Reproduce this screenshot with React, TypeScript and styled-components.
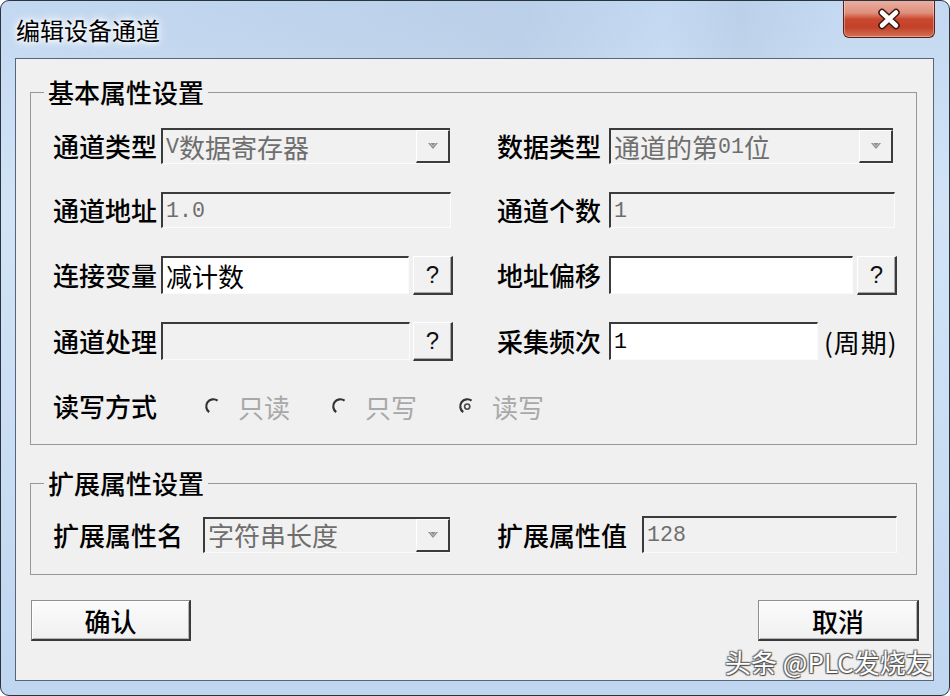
import React from "react";
import styled, { createGlobalStyle } from "styled-components";

const CJK = `"Noto Sans CJK SC", "Noto Sans", sans-serif`;

const Global = createGlobalStyle`
  html, body { margin: 0; padding: 0; background: #ffffff; }
  body { width: 950px; height: 696px; overflow: hidden; font-family: ${CJK}; }
`;

const Window = styled.div`
  position: relative;
  box-sizing: border-box;
  width: 950px;
  height: 696px;
  border: 1px solid #2c3340;
  border-radius: 9px;
  overflow: hidden;
  background: linear-gradient(180deg, #c3d8f1 0%, #d2e3f6 30%, #c8dcf2 70%, #c0d6f0 100%);
  display: flex;
  flex-direction: column;
  font-family: ${CJK};
`;

const TitleBar = styled.div`
  height: 57px;
  flex: none;
  display: flex;
  align-items: flex-start;
  justify-content: space-between;
  padding-left: 15px;
  background: linear-gradient(90deg, rgba(180, 200, 225, 0.0) 0%, rgba(170, 190, 215, 0.35) 55%, rgba(200, 220, 240, 0) 70%, rgba(170, 190, 215, 0.3) 78%, rgba(200, 220, 240, 0) 88%);
`;

const Title = styled.div`
  margin-top: 17px;
  font-size: 24px;
  line-height: 24px;
  color: #000;
  text-shadow: 0 0 4px #fff, 0 0 8px #fff, 0 0 12px #fff;
`;

const CloseButton = styled.div`
  box-sizing: border-box;
  width: 92px;
  height: 38px;
  margin-top: -1px;
  margin-right: 14px;
  border: 1px solid #5a2217;
  border-top: none;
  border-radius: 0 0 6px 6px;
  background: linear-gradient(180deg, #eab1a3 0%, #df8f7c 35%, #c9472e 52%, #c2432a 75%, #d67158 100%);
  box-shadow: inset 0 0 0 1px rgba(255, 255, 255, 0.35);
  display: flex;
  align-items: center;
  justify-content: center;
`;

const Client = styled.div`
  box-sizing: border-box;
  height: 623px;
  margin: 0 15px 0 14px;
  border: 1px solid #55657a;
  background: #f0f0f0;
  padding: 20px 16px 0 14px;
  display: flex;
  flex-direction: column;
`;

const Group = styled.fieldset<{ $mt?: number }>`
  margin: ${(p) => p.$mt ?? 0}px 0 0 0;
  padding: 0;
  min-width: 0;
  border: 1px solid #979797;
`;

const Legend = styled.legend`
  margin-left: 13px;
  padding: 0 4px;
  font-size: 26px;
  line-height: 26px;
  font-weight: 500;
  color: #000;
`;

const GroupBody = styled.div<{ $pt: number; $pb: number }>`
  padding: ${(p) => p.$pt}px 20px ${(p) => p.$pb}px 22px;
  display: grid;
  grid-template-columns: 399px 399px;
  column-gap: 45px;
  row-gap: 28px;
`;

const Field = styled.div<{ $h?: number; $span?: boolean }>`
  display: flex;
  align-items: center;
  height: ${(p) => p.$h ?? 36}px;
  ${(p) => (p.$span ? "grid-column: 1 / span 2;" : "")}
`;

const Label = styled.span<{ $w: number }>`
  flex: none;
  width: ${(p) => p.$w}px;
  font-size: 26px;
  line-height: 36px;
  font-weight: 500;
  color: #000;
  white-space: nowrap;
`;

const TextBox = styled.div<{ $w: number; $h?: number; $disabled?: boolean }>`
  box-sizing: border-box;
  flex: none;
  width: ${(p) => p.$w}px;
  height: ${(p) => p.$h ?? 36}px;
  border-style: solid;
  border-width: 2px 1px 1px 2px;
  border-color: #3b3b3b #fbfbfb #fbfbfb #3b3b3b;
  background: ${(p) => (p.$disabled ? "#f1f1f1" : "#ffffff")};
  color: ${(p) => (p.$disabled ? "#6e6e6e" : "#000000")};
  padding-left: 3px;
  font-size: 26px;
  line-height: 28px;
  display: flex;
  align-items: center;
  white-space: nowrap;
  overflow: hidden;
`;

const Combo = styled.div<{ $w: number }>`
  box-sizing: border-box;
  flex: none;
  width: ${(p) => p.$w}px;
  height: 36px;
  border-style: solid;
  border-width: 2px 0 1px 2px;
  border-color: #3b3b3b #fbfbfb #fbfbfb #3b3b3b;
  background: #f1f1f1;
  color: #6e6e6e;
  font-size: 26px;
  line-height: 28px;
  display: flex;
  align-items: stretch;
`;

const ComboText = styled.span`
  flex: 1;
  display: flex;
  align-items: center;
  padding-left: 3px;
  white-space: nowrap;
`;

const DropButton = styled.span`
  box-sizing: border-box;
  flex: none;
  width: 34px;
  border-style: solid;
  border-width: 1px 2px 2px 1px;
  border-color: #ffffff #3b3b3b #3b3b3b #ffffff;
  background: #f1f1f1;
  display: flex;
  align-items: center;
  justify-content: center;
`;

const Ascii = styled.span`
  font-family: "Liberation Mono", monospace;
  font-size: 21.6px;
`;

const SmallButton = styled.div<{ $ml: number; $h?: number }>`
  box-sizing: border-box;
  flex: none;
  width: 40px;
  height: ${(p) => p.$h ?? 39}px;
  margin-left: ${(p) => p.$ml}px;
  border-style: solid;
  border-width: 1px 2px 2px 1px;
  border-color: #ffffff #3b3b3b #3b3b3b #ffffff;
  box-shadow: inset -1px -1px 0 #a8a8a8;
  background: #f1f1f1;
  font-family: "Liberation Sans", sans-serif;
  font-size: 24px;
  color: #111;
  display: flex;
  align-items: center;
  justify-content: center;
`;

const Suffix = styled.span`
  margin-left: 6px;
  font-size: 26px;
  letter-spacing: 1px;
  color: #000;
  white-space: nowrap;
`;

const RadioGroup = styled.div`
  display: flex;
  align-items: center;
  margin-left: 43px;
`;

const RadioItem = styled.div`
  width: 127px;
  flex: none;
  display: flex;
  align-items: center;
  gap: 16px;
`;

const RadioText = styled.span`
  font-size: 26px;
  color: #a8a8a8;
  white-space: nowrap;
`;

const ButtonRow = styled.div`
  margin: 25px -2px 0 1px;
  display: flex;
  justify-content: space-between;
`;

const PushButton = styled.div<{ $w: number }>`
  box-sizing: border-box;
  width: ${(p) => p.$w}px;
  height: 41px;
  border-style: solid;
  border-width: 1px 2px 2px 1px;
  border-color: #8e8e8e #3a3a3a #3a3a3a #8e8e8e;
  box-shadow: inset 1px 1px 0 #ffffff, inset -1px -1px 0 #b4b4b4;
  background: linear-gradient(180deg, #fbfbfb 0%, #f0f0f0 100%);
  font-size: 26px;
  font-weight: 500;
  color: #000;
  display: flex;
  align-items: center;
  justify-content: center;
`;

const Watermark = styled.div`
  position: absolute;
  left: 724px;
  top: 645px;
  font-size: 26px;
  line-height: 32px;
  color: #ffffff;
  white-space: nowrap;
  text-shadow: 1px 1px 1px #4a4a4a, -1px -1px 1px #6a6a6a, 1px -1px 1px #6a6a6a, -1px 1px 1px #6a6a6a;
`;

const CloseIcon = () => (
  <svg width="28" height="22" viewBox="0 0 28 22">
    <path d="M7 4.5 L21 17.5 M21 4.5 L7 17.5" stroke="#3d1710" strokeWidth="7.5" strokeLinecap="round" />
    <path d="M7 4.5 L21 17.5 M21 4.5 L7 17.5" stroke="#ffffff" strokeWidth="4.5" strokeLinecap="round" />
  </svg>
);

const ArrowIcon = () => (
  <svg width="12" height="8" viewBox="0 0 12 8">
    <path d="M1 1 L11 1 L6 7 Z" fill="#8e8e8e" />
    <path d="M3 1 L6 4.5 L9 1" fill="none" stroke="#c8c8c8" strokeWidth="1" />
  </svg>
);

const RadioIcon = ({ checked }: { checked?: boolean }) => (
  <svg width="18" height="20" viewBox="0 0 18 20">
    <path d="M13.6 4.6 A6.6 6.6 0 1 0 5.2 16.2" fill="none" stroke="#333333" strokeWidth="2.2" />
    {checked && <circle cx="9.2" cy="10.6" r="2.6" fill="none" stroke="#4a4a4a" strokeWidth="1.6" />}
  </svg>
);

const ComboBox = ({ w, children }: { w: number; children: React.ReactNode }) => (
  <Combo $w={w}>
    <ComboText>{children}</ComboText>
    <DropButton>
      <ArrowIcon />
    </DropButton>
  </Combo>
);

export default function App() {
  return (
    <>
      <Global />
      <Window>
        <TitleBar>
          <Title>编辑设备通道</Title>
          <CloseButton>
            <CloseIcon />
          </CloseButton>
        </TitleBar>
        <Client>
          <Group>
            <Legend>基本属性设置</Legend>
            <GroupBody $pt={23} $pb={20}>
              <Field>
                <Label $w={108}>通道类型</Label>
                <ComboBox w={289}>
                  <Ascii>V</Ascii>数据寄存器
                </ComboBox>
              </Field>
              <Field>
                <Label $w={112}>数据类型</Label>
                <ComboBox w={284}>
                  通道的第<Ascii>01</Ascii>位
                </ComboBox>
              </Field>

              <Field>
                <Label $w={108}>通道地址</Label>
                <TextBox $w={290} $disabled>
                  <Ascii>1.0</Ascii>
                </TextBox>
              </Field>
              <Field>
                <Label $w={112}>通道个数</Label>
                <TextBox $w={286} $disabled>
                  <Ascii>1</Ascii>
                </TextBox>
              </Field>

              <Field $h={38}>
                <Label $w={108}>连接变量</Label>
                <TextBox $w={248} $h={38}>
                  减计数
                </TextBox>
                <SmallButton $ml={4}>?</SmallButton>
              </Field>
              <Field $h={38}>
                <Label $w={112}>地址偏移</Label>
                <TextBox $w={244} $h={38} />
                <SmallButton $ml={4}>?</SmallButton>
              </Field>

              <Field $h={38}>
                <Label $w={108}>通道处理</Label>
                <TextBox $w={249} $h={38} $disabled />
                <SmallButton $ml={3}>?</SmallButton>
              </Field>
              <Field $h={38}>
                <Label $w={112}>采集频次</Label>
                <TextBox $w={209} $h={38}>
                  <Ascii>1</Ascii>
                </TextBox>
                <Suffix>(周期)</Suffix>
              </Field>

              <Field $span>
                <Label $w={108}>读写方式</Label>
                <RadioGroup>
                  <RadioItem>
                    <RadioIcon />
                    <RadioText>只读</RadioText>
                  </RadioItem>
                  <RadioItem>
                    <RadioIcon />
                    <RadioText>只写</RadioText>
                  </RadioItem>
                  <RadioItem>
                    <RadioIcon checked />
                    <RadioText>读写</RadioText>
                  </RadioItem>
                </RadioGroup>
              </Field>
            </GroupBody>
          </Group>

          <Group $mt={25}>
            <Legend>扩展属性设置</Legend>
            <GroupBody $pt={20} $pb={21}>
              <Field $h={37}>
                <Label $w={150}>扩展属性名</Label>
                <ComboBox w={247}>字符串长度</ComboBox>
              </Field>
              <Field $h={37}>
                <Label $w={145}>扩展属性值</Label>
                <TextBox $w={255} $h={37} $disabled>
                  <Ascii>128</Ascii>
                </TextBox>
              </Field>
            </GroupBody>
          </Group>

          <ButtonRow>
            <PushButton $w={160}>确认</PushButton>
            <PushButton $w={161}>取消</PushButton>
          </ButtonRow>
        </Client>
        <Watermark>头条 @PLC发烧友</Watermark>
      </Window>
    </>
  );
}
